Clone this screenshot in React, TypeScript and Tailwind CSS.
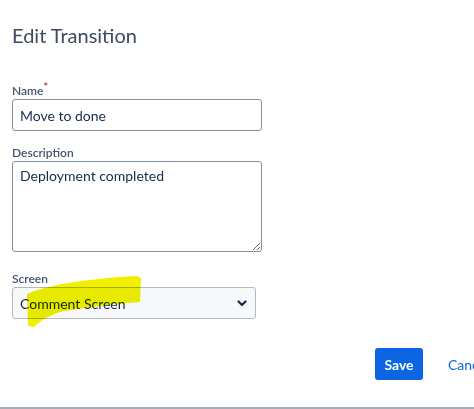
const font = { fontFamily: 'Lato, "Noto Sans", sans-serif' }

const Chevron = () => (
  <svg width="10" height="7" viewBox="0 0 10 7" className="text-[#172b4d]">
    <path d="M1.5 1.5 L5 5 L8.5 1.5" fill="none" stroke="currentColor" strokeWidth="2.2" strokeLinecap="round" strokeLinejoin="round" />
  </svg>
)

// yellow marker stroke drawn over the select
const Highlight = () => (
  <svg
    className="pointer-events-none absolute -left-[12px] -top-[17px] z-20 mix-blend-multiply"
    width="150"
    height="64"
    viewBox="0 0 150 64"
  >
    <path
      d="M27 24 C45 16 80 9 137 6 L141 8 L140 32 C115 34 85 37 60 42 C48 46 40 51 34 57 L28 56 Z"
      fill="#f0f000"
    />
  </svg>
)

export default function App() {
  return (
    <div className="flex h-[409px] w-[474px] flex-col overflow-hidden bg-white" style={font}>
      <div className="flex-1 px-[12px] pt-[23px]">
        <h2 className="text-[20px] leading-[24px] font-normal text-[#3d4b60]">Edit Transition</h2>

        <label className="mt-[36px] block text-[12px] leading-[16px] font-semibold text-[#44546f]">
          Name<span className="relative -top-[4px] text-[#c9372c]">*</span>
        </label>
        <div className="flex h-[32px] w-[250px] items-center rounded-[3px] border border-[#8590a2] px-[7px] text-[14px] text-[#172b4d]">
          Move to done
        </div>

        <label className="mt-[14px] block text-[12px] leading-[16px] font-semibold text-[#44546f]">Description</label>
        <textarea
          readOnly
          defaultValue="Deployment completed"
          className="block h-[91px] w-[250px] rounded-[3px] border border-[#8590a2] px-[7px] pt-[4px] text-[14px] leading-[20px] text-[#172b4d] outline-none"
        />

        <label className="mt-[19px] block text-[12px] leading-[16px] font-semibold text-[#44546f]">Screen</label>
        <div className="relative">
          <div className="flex h-[32px] w-[244px] items-center justify-between rounded-[3px] border border-[#b3b9c4] bg-[#f7f8f9] pl-[7px] pr-[8px] text-[14px] text-[#172b4d]">
            <span>Comment Screen</span>
            <Chevron />
          </div>
          <Highlight />
        </div>

        <div className="mt-[29px] flex items-center gap-[25px] pl-[363px]">
          <button className="h-[32px] w-[48px] shrink-0 rounded-[3px] bg-[#0c66e4] text-[14px] font-bold text-white">Save</button>
          <span className="shrink-0 text-[14px] text-[#0c66e4]">Cancel</span>
        </div>
      </div>
      <div className="h-[2px] w-full bg-[#a9abb8]" />
    </div>
  )
}
